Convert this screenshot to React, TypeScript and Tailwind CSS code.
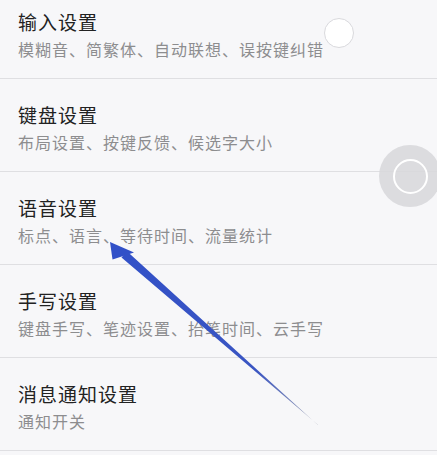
import React from "react";

const rows = [
  { title: "输入设置", sub: "模糊音、简繁体、自动联想、误按键纠错" },
  { title: "键盘设置", sub: "布局设置、按键反馈、候选字大小" },
  { title: "语音设置", sub: "标点、语言、等待时间、流量统计" },
  { title: "手写设置", sub: "键盘手写、笔迹设置、抬笔时间、云手写" },
  { title: "消息通知设置", sub: "通知开关" },
];

export default function App() {
  return (
    <div
      className="relative w-[437px] h-[455px] overflow-hidden bg-[#f7f7f9]"
      style={{ fontFamily: '"Noto Sans CJK SC", "Noto Sans", sans-serif' }}
    >
      <div className="mt-[-14px] flex flex-col">
        {rows.map((r) => (
          <div
            key={r.title}
            className="h-[93px] border-b border-[#dfdfe2] pl-[18px] pt-[24px] flex flex-col"
          >
            <div className="text-[19px] leading-[24px] tracking-[1px] text-[#222222]">
              {r.title}
            </div>
            <div className="mt-[4px] text-[16px] leading-[22px] tracking-[1px] text-[#8d8d8f]">
              {r.sub}
            </div>
          </div>
        ))}
      </div>

      {/* small circle */}
      <div className="absolute left-[324px] top-[18px] w-[30px] h-[30px] rounded-full bg-white border-[1.5px] border-[#d9d9dd]" />

      {/* floating assistive button */}
      <div className="absolute left-[379px] top-[145px] w-[62px] h-[62px] rounded-full bg-[#d8d8dc]/90 flex items-center justify-center">
        <div className="w-[35px] h-[35px] rounded-full border-[2.5px] border-white" />
      </div>

      {/* arrow */}
      <svg
        className="absolute left-0 top-0 pointer-events-none"
        width="437"
        height="455"
        viewBox="0 0 437 455"
      >
        <defs>
          <linearGradient
            id="ag"
            gradientUnits="userSpaceOnUse"
            x1="110"
            y1="242"
            x2="318"
            y2="425"
          >
            <stop offset="0" stopColor="#3150c8" />
            <stop offset="0.7" stopColor="#3a55c2" />
            <stop offset="1" stopColor="#a3a7b3" />
          </linearGradient>
        </defs>
        <polygon
          points="110,242 112.5,259.5 134,252.5"
          fill="#3150c8"
        />
        <polygon
          points="121.5,257.5 127.2,251.5 318.4,425.4 317.6,424.6"
          fill="url(#ag)"
        />
      </svg>
    </div>
  );
}
